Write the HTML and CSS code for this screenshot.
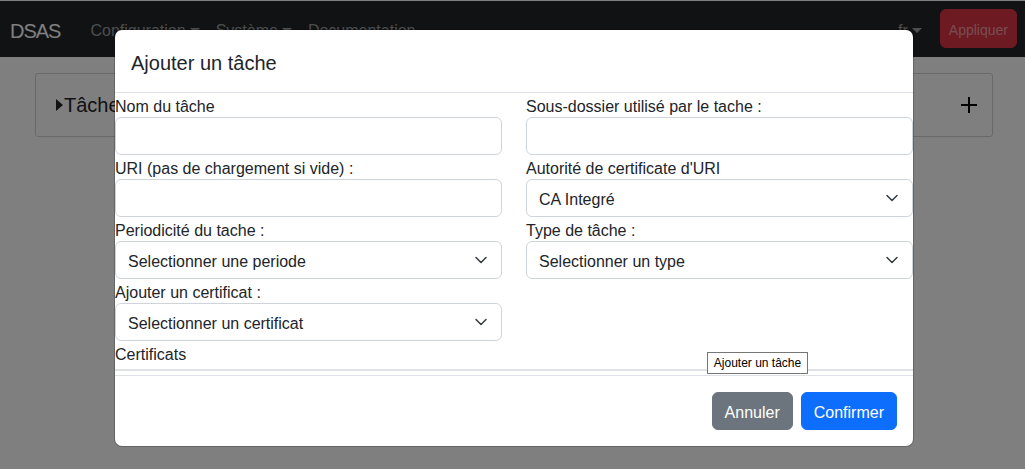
FILE: index.html
```html
<!DOCTYPE html>
<html lang="fr">
<head>
<meta charset="utf-8">
<title>DSAS</title>
<link rel="stylesheet" href="styles.css">
</head>
<body>
<nav class="navbar">
  <a class="brand">DSAS</a>
  <ul class="nav">
    <li class="nav-link dropdown">Configuration</li>
    <li class="nav-link dropdown">Système</li>
    <li class="nav-link">Documentation</li>
  </ul>
  <div class="nav-right">
    <span class="nav-link dropdown">fr</span>
    <button class="btn-apply">Appliquer</button>
  </div>
</nav>
<main class="page">
  <section class="card">
    <div class="card-head">
      <span class="toggle"><span class="tri"></span>Tâches</span>
      <svg class="plus" width="16" height="16" viewBox="0 0 16 16"><path d="M8 0v16M0 8h16" stroke="#000" stroke-width="2"/></svg>
    </div>
  </section>
</main>
<div class="backdrop"></div>
<div class="modal">
  <div class="modal-header"><h5 class="modal-title">Ajouter un tâche</h5></div>
  <div class="modal-body">
    <div class="field">
      <label class="label">Nom du tâche</label>
      <div class="control"></div>
    </div>
    <div class="field">
      <label class="label">Sous-dossier utilisé par le tache :</label>
      <div class="control"></div>
    </div>
    <div class="field">
      <label class="label">URI (pas de chargement si vide) :</label>
      <div class="control"></div>
    </div>
    <div class="field">
      <label class="label">Autorité de certificate d'URI</label>
      <div class="control select"><span class="value">CA Integré</span><svg class="chev" width="12" height="8" viewBox="0 0 12 8"><path d="M1 1.5l5 5 5-5" fill="none" stroke="#343a40" stroke-width="1.5" stroke-linecap="round" stroke-linejoin="round"/></svg></div>
    </div>
    <div class="field">
      <label class="label">Periodicité du tache :</label>
      <div class="control select"><span class="value">Selectionner une periode</span><svg class="chev" width="12" height="8" viewBox="0 0 12 8"><path d="M1 1.5l5 5 5-5" fill="none" stroke="#343a40" stroke-width="1.5" stroke-linecap="round" stroke-linejoin="round"/></svg></div>
    </div>
    <div class="field">
      <label class="label">Type de tâche :</label>
      <div class="control select"><span class="value">Selectionner un type</span><svg class="chev" width="12" height="8" viewBox="0 0 12 8"><path d="M1 1.5l5 5 5-5" fill="none" stroke="#343a40" stroke-width="1.5" stroke-linecap="round" stroke-linejoin="round"/></svg></div>
    </div>
    <div class="field">
      <label class="label">Ajouter un certificat :</label>
      <div class="control select"><span class="value">Selectionner un certificat</span><svg class="chev" width="12" height="8" viewBox="0 0 12 8"><path d="M1 1.5l5 5 5-5" fill="none" stroke="#343a40" stroke-width="1.5" stroke-linecap="round" stroke-linejoin="round"/></svg></div>
    </div>
    <div class="field empty"></div>
    <div class="certs">
      <label class="label">Certificats</label>
      <div class="cert-list"></div>
    </div>
  </div>
  <div class="modal-footer">
    <button class="btn btn-secondary">Annuler</button>
    <button class="btn btn-primary">Confirmer</button>
  </div>
</div>
<div class="tooltip">Ajouter un tâche</div>
</body>
</html>
```

FILE: styles.css
```css
* { box-sizing: border-box; }
html, body { margin: 0; padding: 0; }
body {
  width: 1025px;
  height: 469px;
  overflow: hidden;
  position: relative;
  background: #fff;
  color: #212529;
  font-family: "Liberation Sans", Arial, sans-serif;
  font-size: 16px;
  line-height: 24px;
}

/* navbar */
.navbar {
  height: 57px;
  border-top: 1px solid #fff;
  background: #212529;
  display: flex;
  align-items: center;
  padding: 0 8px 0 10px;
}
.brand {
  color: #fff;
  font-size: 20px;
  line-height: 30px;
  letter-spacing: -1px;
  margin-right: 22px;
  padding-top: 3px;
}
.nav {
  list-style: none;
  margin: 0;
  padding: 0;
  display: flex;
  flex: 1;
}
.nav-link {
  color: rgba(255, 255, 255, .55);
  padding: 4px 8px 0;
  line-height: 24px;
}
.dropdown::after {
  content: "";
  display: inline-block;
  margin-left: 4px;
  vertical-align: 3px;
  border-top: 5px solid;
  border-left: 5px solid transparent;
  border-right: 5px solid transparent;
}
.nav-right {
  display: flex;
  align-items: center;
  gap: 10px;
}
.btn-apply {
  height: 39px;
  padding: 2px 8px 0;
  border: 1px solid #dc3545;
  border-radius: 6px;
  background: #dc3545;
  color: rgba(255, 255, 255, .5);
  font-family: inherit;
  font-size: 14px;
  margin-top: -1px;
}

/* page */
.page {
  padding: 16px 32px 0 35px;
}
.card {
  border: 1px solid rgba(0, 0, 0, .175);
  border-radius: 3px;
}
.card-head {
  display: flex;
  align-items: center;
  justify-content: space-between;
  padding: 16px 15px 16px 20px;
}
.toggle {
  font-size: 20px;
  line-height: 30px;
  display: flex;
  align-items: center;
}
.tri {
  width: 0;
  height: 0;
  border-left: 7px solid #212529;
  border-top: 6px solid transparent;
  border-bottom: 6px solid transparent;
  margin-right: 1px;
}
.plus { display: block; }

.backdrop {
  position: absolute;
  inset: 0;
  background: rgba(0, 0, 0, .5);
}

/* modal */
.modal {
  position: absolute;
  left: 115px;
  top: 30px;
  width: 798px;
  background: #fff;
  border-radius: 7px;
  box-shadow: 0 0 0 1px rgba(0, 0, 0, .2);
}
.modal-header {
  padding: 18px 16px 14px;
  border-bottom: 1px solid #dee2e6;
}
.modal-title {
  margin: 0;
  font-size: 20px;
  line-height: 30px;
  font-weight: 400;
}
.modal-body {
  display: grid;
  grid-template-columns: 387px 387px;
  column-gap: 24px;
  padding-bottom: 4px;
}
.label {
  display: block;
  height: 24px;
  padding-top: 2px;
  line-height: 24px;
}
.control {
  height: 38px;
  border: 1px solid #ced4da;
  border-radius: 6px;
  background: #fff;
}
.select {
  display: flex;
  align-items: center;
  justify-content: space-between;
  padding: 0 14px 0 12px;
}
.value { padding-top: 4px; }
.chev { display: block; }
.certs {
  grid-column: 1 / -1;
}
.cert-list {
  margin-top: 4px;
  border-top: 2px solid #dee2e6;
}
.modal-footer {
  border-top: 1px solid #dee2e6;
  padding: 12px;
  display: flex;
  justify-content: flex-end;
}
.btn {
  height: 38px;
  margin: 4px;
  padding: 8px 12px 4px;
  border: 1px solid transparent;
  border-radius: 6px;
  font-family: inherit;
  font-size: 16px;
  line-height: 24px;
  color: #fff;
}
.btn-secondary { background: #6c757d; border-color: #6c757d; }
.btn-primary { background: #0d6efd; border-color: #0d6efd; }

.tooltip {
  position: absolute;
  left: 707px;
  top: 352px;
  width: 101px;
  height: 22px;
  padding-top: 1px;
  border: 1px solid #767676;
  background: #fff;
  color: #000;
  font-size: 12px;
  line-height: 19px;
  text-align: center;
}
```
